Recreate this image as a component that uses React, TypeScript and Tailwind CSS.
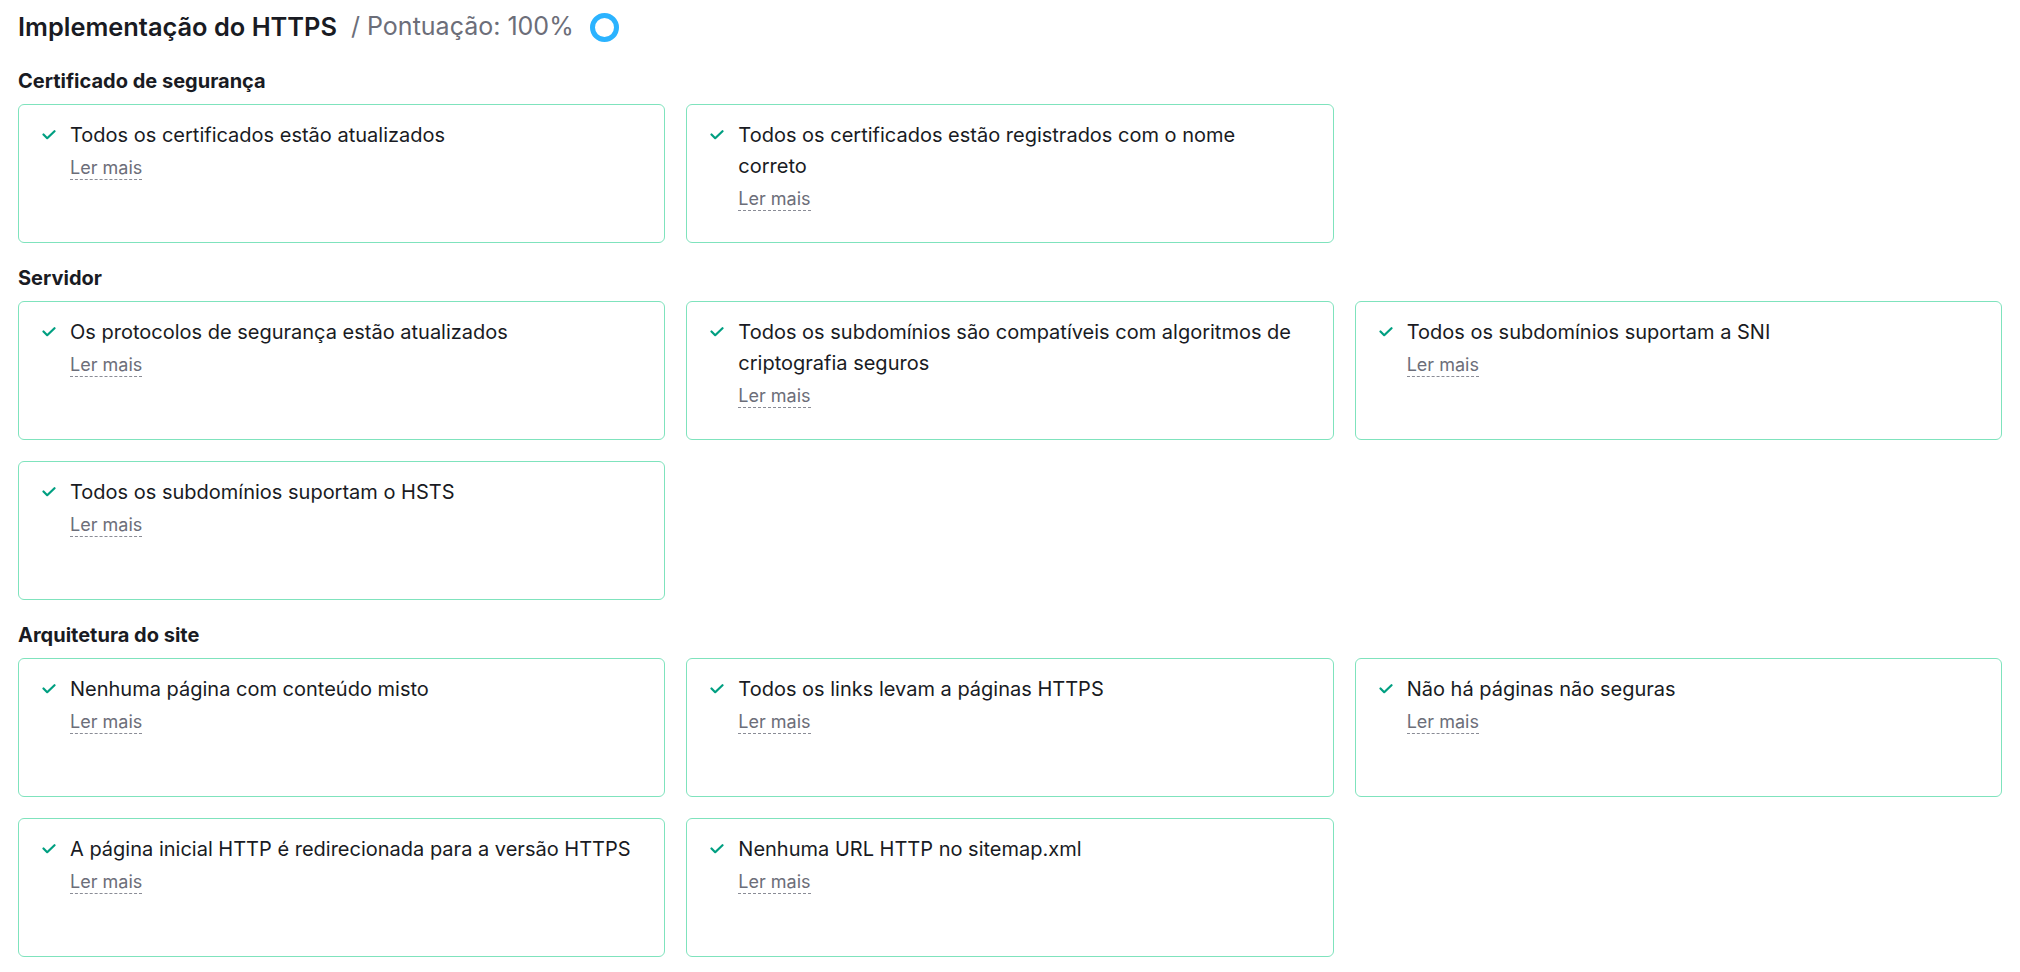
type Check = {
  title: string;
};

type Section = {
  name: string;
  checks: Check[];
};

const sections: Section[] = [
  {
    name: 'Certificado de segurança',
    checks: [
      { title: 'Todos os certificados estão atualizados' },
      { title: 'Todos os certificados estão registrados com o nome correto' },
    ],
  },
  {
    name: 'Servidor',
    checks: [
      { title: 'Os protocolos de segurança estão atualizados' },
      { title: 'Todos os subdomínios são compatíveis com algoritmos de criptografia seguros' },
      { title: 'Todos os subdomínios suportam a SNI' },
      { title: 'Todos os subdomínios suportam o HSTS' },
    ],
  },
  {
    name: 'Arquitetura do site',
    checks: [
      { title: 'Nenhuma página com conteúdo misto' },
      { title: 'Todos os links levam a páginas HTTPS' },
      { title: 'Não há páginas não seguras' },
      { title: 'A página inicial HTTP é redirecionada para a versão HTTPS' },
      { title: 'Nenhuma URL HTTP no sitemap.xml' },
    ],
  },
];

function CheckIcon() {
  return (
    <svg width="14" height="10" viewBox="0 0 14 10" fill="none" className="shrink-0 mt-[10px]">
      <path d="M1.5 4.5L5.2 8.2L12.5 1.2" stroke="#009f81" strokeWidth="2.2" strokeLinecap="round" strokeLinejoin="round" />
    </svg>
  );
}

function CheckCard({ check }: { check: Check }) {
  return (
    <div className="h-[139px] rounded-[6px] border border-[#7fe3bd] bg-white pl-[23px] pr-[24px] pt-[15px]">
      <div className="flex items-start gap-[14px]">
        <CheckIcon />
        <div className="min-w-0">
          <div className="text-[20px] leading-[31px] text-[#191b23]">{check.title}</div>
          <div className="mt-[5px] leading-[24px]">
            <span className="text-[18px] text-[#6c6e79] border-b border-dashed border-[#8a8c96] pb-[1px]">
              Ler mais
            </span>
          </div>
        </div>
      </div>
    </div>
  );
}

export default function App() {
  return (
    <div className="min-h-screen bg-white px-[18px] pt-[8px] pb-[14px] font-['Inter','Noto_Sans',sans-serif]">
      <div className="flex h-[38px] items-center">
        <h1 className="text-[25.4px] font-semibold text-[#191b23]">Implementação do HTTPS</h1>
        <span className="ml-[14px] text-[25px] text-[#6c6e79]">/ Pontuação: 100%</span>
        <span className="ml-[16px] inline-block h-[29px] w-[29px] rounded-full border-[5px] border-[#2bb3ff]" />
      </div>

      {sections.map((section) => (
        <div key={section.name} className="mt-[20px]">
          <h2 className="mb-[8px] text-[20px] font-bold leading-[30px] text-[#191b23]">{section.name}</h2>
          <div className="grid grid-cols-3 gap-x-[21px] gap-y-[21px]">
            {section.checks.map((check) => (
              <CheckCard key={check.title} check={check} />
            ))}
          </div>
        </div>
      ))}
    </div>
  );
}
